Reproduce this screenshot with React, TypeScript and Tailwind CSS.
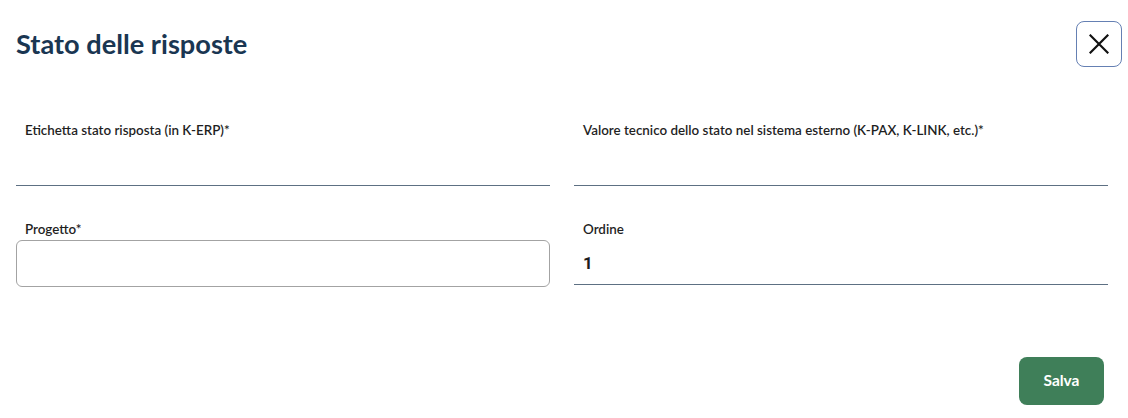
import type { ReactNode } from 'react';

function FieldLabel({ children }: { children: ReactNode }) {
  return (
    <label className="block pl-[9px] text-[13.4px] leading-4 font-semibold text-[#1f1f1f]">
      {children}
    </label>
  );
}

function UnderlineInput({ value = '' }: { value?: string }) {
  return (
    <input
      readOnly
      value={value}
      className="block h-12 w-full border-0 border-b border-[#5d7083] bg-transparent px-[9px] pt-1 text-[17px] font-bold text-[#1c1c1c] outline-none font-['Roboto',sans-serif]"
    />
  );
}

function CloseIcon() {
  return (
    <svg width="20" height="20" viewBox="0 0 20 20" fill="none" stroke="#111" strokeWidth="2.2" strokeLinecap="square">
      <path d="M1.5 1.5 18.5 18.5M18.5 1.5 1.5 18.5" />
    </svg>
  );
}

export default function App() {
  return (
    <div className="h-[418px] w-[1128px] overflow-hidden bg-white pt-[21px] font-['Lato',sans-serif]">
      <div className="flex h-[46px] items-center justify-between pl-4 pr-[6px]">
        <h1 className="text-[27.2px] leading-8 font-bold text-[#1a3652]">Stato delle risposte</h1>
        <button className="flex h-[46px] w-[46px] items-center justify-center rounded-lg border border-[#6580b3] bg-white">
          <CloseIcon />
        </button>
      </div>

      <div className="mt-[55px] grid grid-cols-2 gap-x-6 pl-4 pr-5">
        <div>
          <FieldLabel>Etichetta stato risposta (in K-ERP)*</FieldLabel>
          <UnderlineInput />
        </div>
        <div>
          <FieldLabel>Valore tecnico dello stato nel sistema esterno (K-PAX, K-LINK, etc.)*</FieldLabel>
          <UnderlineInput />
        </div>

        <div className="mt-[35px]">
          <FieldLabel>Progetto*</FieldLabel>
          <div className="mt-[3px] h-[47px] rounded-md border border-[#a3a3a3] bg-white" />
        </div>
        <div className="mt-[35px]">
          <FieldLabel>Ordine</FieldLabel>
          <UnderlineInput value="1" />
        </div>
      </div>

      <div className="mt-[70px] flex justify-end pr-6">
        <button className="h-12 w-[85px] rounded-lg bg-[#3f7f59] text-[15.5px] font-bold text-white">
          Salva
        </button>
      </div>
    </div>
  );
}
